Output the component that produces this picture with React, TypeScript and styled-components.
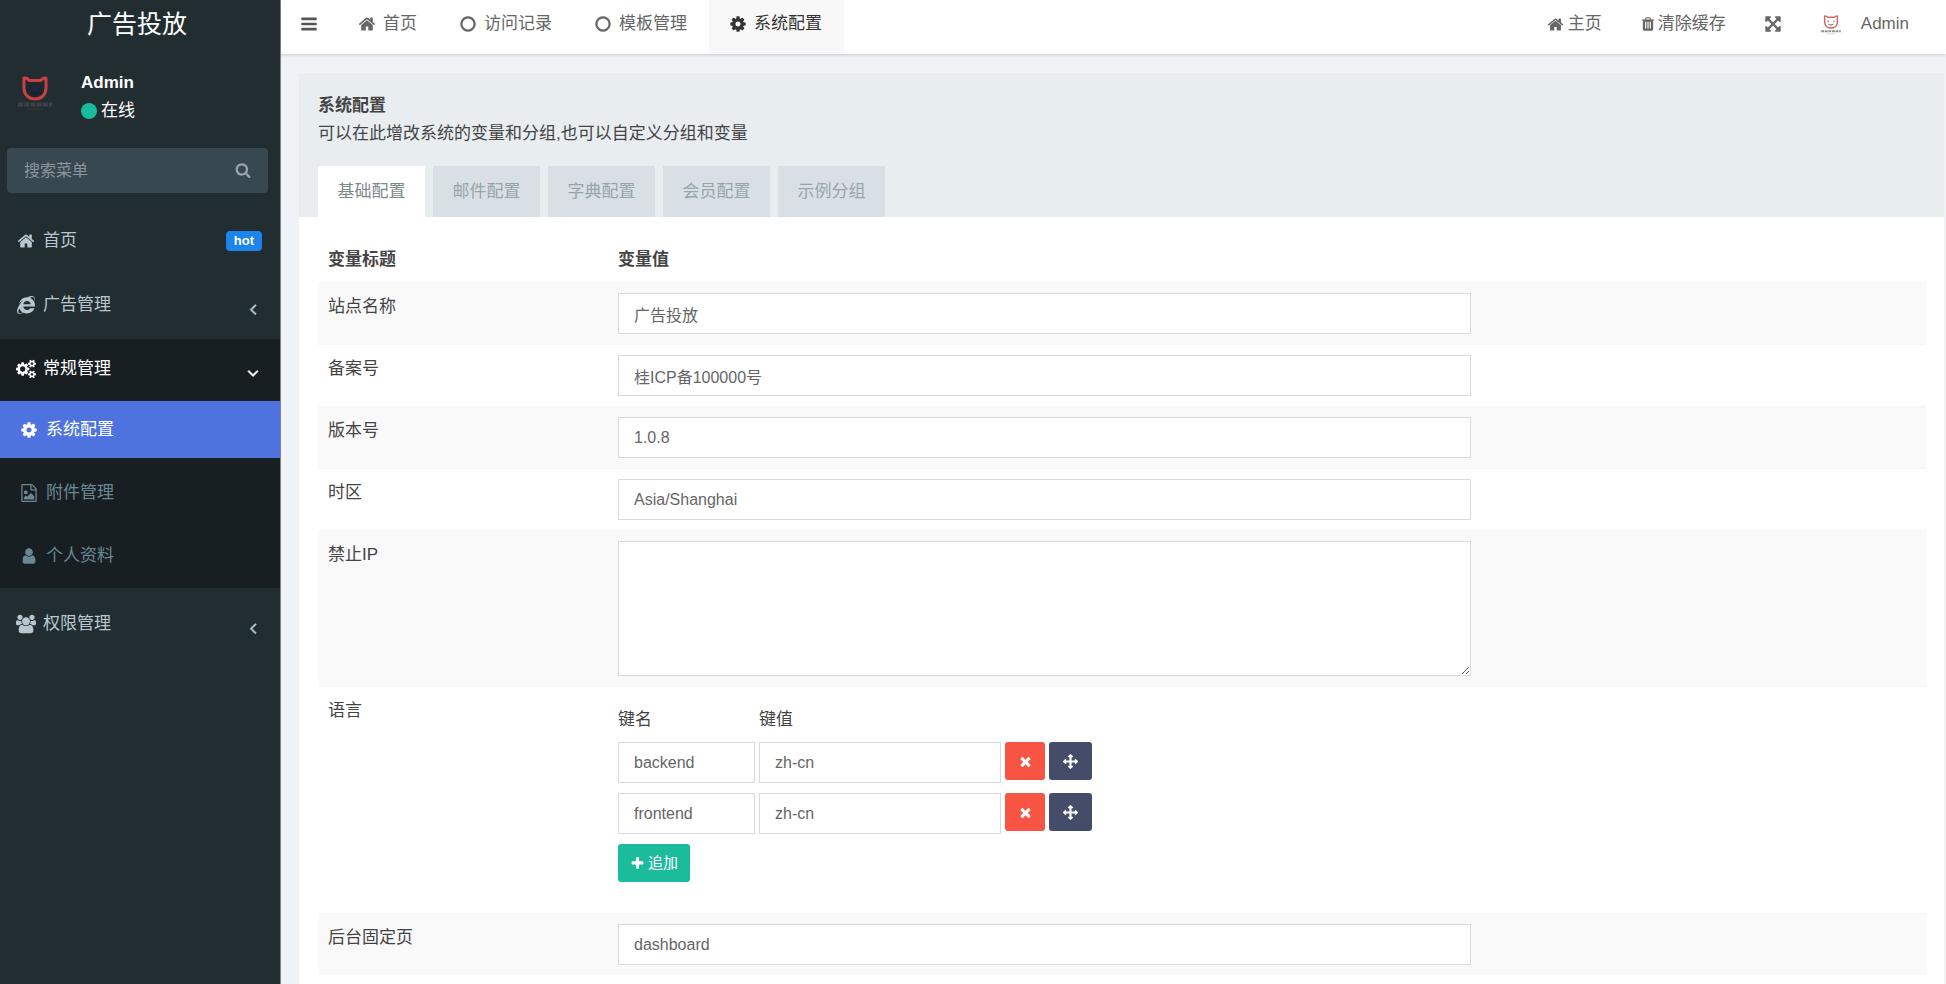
import React, { useState } from "react";
import styled, { createGlobalStyle, css } from "styled-components";
import { FaInternetExplorer } from "react-icons/fa";

const GlobalStyle = createGlobalStyle`
  *, *::before, *::after { box-sizing: border-box; }
  html, body, #root { height: 100%; }
  body {
    margin: 0;
    overflow: hidden;
    background: #eff2f6;
    color: #444;
    font-family: "Liberation Sans", "Noto Sans CJK SC", sans-serif;
    font-size: 17px;
    line-height: 24px;
  }
  a { color: inherit; text-decoration: none; }
  button, input, textarea { font: inherit; margin: 0; }
  ul, ol { list-style: none; margin: 0; padding: 0; }
`;

/* ---------- icons ---------- */

const paths = {
  home: "M1472 992v480q0 26-19 45t-45 19h-384v-384h-256v384h-384q-26 0-45-19t-19-45v-480q0-1 .5-3t.5-3l575-474 575 474q1 2 1 6zm223-69l-62 74q-8 9-21 11h-3q-13 0-21-7l-692-577-692 577q-12 8-24 7-13-2-21-11l-62-74q-8-10-7-23.5t11-21.5l719-599q32-26 76-26t76 26l244 204v-195q0-14 9-23t23-9h192q14 0 23 9t9 23v408l219 182q10 8 11 21.5t-7 23.5z",
  cog: "M1152 896q0-106-75-181t-181-75-181 75-75 181 75 181 181 75 181-75 75-181zm512-109v222q0 12-8 23t-20 13l-185 28q-19 54-39 91 35 50 107 138 10 12 10 25t-9 23q-27 37-99 108t-94 71q-12 0-26-9l-138-108q-44 23-91 38-16 136-29 186-7 28-36 28h-222q-14 0-24.5-8.5t-11.5-21.5l-28-184q-49-16-90-37l-141 107q-10 9-25 9-14 0-25-11-126-114-165-168-7-10-7-23 0-12 8-23 15-21 51-66.5t54-70.5q-27-50-41-99l-183-27q-13-2-21-12.5t-8-23.5v-222q0-12 8-23t19-13l186-28q14-46 39-92-40-57-107-138-10-12-10-24 0-10 9-23 26-36 98.5-107.5t94.5-71.5q13 0 26 10l138 107q44-23 91-38 16-136 29-186 7-28 36-28h222q14 0 24.5 8.5t11.5 21.5l28 184q49 16 90 37l142-107q9-9 24-9 13 0 25 10 129 119 165 170 7 8 7 22 0 12-8 23-15 21-51 66.5t-54 70.5q26 50 41 98l183 28q13 2 21 12.5t8 23.5z",
  cogs: "M896 896q0-106-75-181t-181-75-181 75-75 181 75 181 181 75 181-75 75-181zm768 512q0-52-38-90t-90-38-90 38-38 90q0 53 37.5 90.5t90.5 37.5 90.5-37.5 37.5-90.5zm0-1024q0-52-38-90t-90-38-90 38-38 90q0 53 37.5 90.5t90.5 37.5 90.5-37.5 37.5-90.5zm-384 421v185q0 10-7 19.5t-16 10.5l-155 24q-11 35-32 76 34 48 90 115 7 11 7 20 0 12-7 19-23 30-82.5 89.5t-78.5 59.5q-11 0-21-7l-115-90q-37 19-77 31-11 108-23 155-7 24-30 24h-186q-11 0-20-7.5t-10-17.5l-23-153q-34-10-75-31l-118 89q-7 7-20 7-11 0-21-8-144-133-144-160 0-9 7-19 10-14 41-53t47-61q-23-44-35-82l-152-24q-10-1-17-9.5t-7-19.5v-185q0-10 7-19.5t16-10.5l155-24q11-35 32-76-34-48-90-115-7-11-7-20 0-12 7-20 22-30 82-89t79-59q11 0 21 7l115 90q34-18 77-32 11-108 23-154 7-24 30-24h186q11 0 20 7.5t10 17.5l23 153q34 10 75 31l118-89q8-7 20-7 11 0 21 8 144 133 144 160 0 8-7 19-12 16-42 54t-45 60q23 48 34 82l152 23q10 2 17 10.5t7 19.5zm640 533v140q0 16-149 31-12 27-30 52 51 113 51 138 0 4-4 7-122 71-124 71-8 0-46-47t-52-68q-20 2-30 2t-30-2q-14 21-52 68t-46 47q-2 0-124-71-4-3-4-7 0-25 51-138-18-25-30-52-149-15-149-31v-140q0-16 149-31 13-29 30-52-51-113-51-138 0-4 4-7 4-2 35-20t59-34 30-16q8 0 46 46.5t52 67.5q20-2 30-2t30 2q51-71 92-112l6-2q4 0 124 70 4 3 4 7 0 25-51 138 17 23 30 52 149 15 149 31zm0-1024v140q0 16-149 31-12 27-30 52 51 113 51 138 0 4-4 7-122 71-124 71-8 0-46-47t-52-68q-20 2-30 2t-30-2q-14 21-52 68t-46 47q-2 0-124-71-4-3-4-7 0-25 51-138-18-25-30-52-149-15-149-31v-140q0-16 149-31 13-29 30-52-51-113-51-138 0-4 4-7 4-2 35-20t59-34 30-16q8 0 46 46.5t52 67.5q20-2 30-2t30 2q51-71 92-112l6-2q4 0 124 70 4 3 4 7 0 25-51 138 17 23 30 52 149 15 149 31z",
  bars: "M1664 1344v128q0 26-19 45t-45 19h-1408q-26 0-45-19t-19-45v-128q0-26 19-45t45-19h1408q26 0 45 19t19 45zm0-512v128q0 26-19 45t-45 19h-1408q-26 0-45-19t-19-45v-128q0-26 19-45t45-19h1408q26 0 45 19t19 45zm0-512v128q0 26-19 45t-45 19h-1408q-26 0-45-19t-19-45v-128q0-26 19-45t45-19h1408q26 0 45 19t19 45z",
  circle: "M896 352q-148 0-273 73t-198 198-73 273 73 273 198 198 273 73 273-73 198-198 73-273-73-273-198-198-273-73zm768 544q0 209-103 385.500t-279.500 279.500-385.500 103-385.500-103-279.500-279.500-103-385.500 103-385.500 279.500-279.500 385.500-103 385.500 103 279.500 279.500 103 385.500z",
  search: "M1216 832q0-185-131.5-316.5t-316.5-131.5-316.5 131.5-131.5 316.5 131.5 316.5 316.5 131.5 316.5-131.5 131.5-316.5zm512 832q0 52-38 90t-90 38q-54 0-90-38l-343-342q-179 124-399 124-143 0-273.5-55.5t-225-150-150-225-55.5-273.5 55.5-273.5 150-225 225-150 273.5-55.5 273.5 55.5 225 150 150 225 55.5 273.5q0 220-124 399l343 343q37 37 37 90z",
  trash: "M704 1376v-704q0-14-9-23t-23-9h-64q-14 0-23 9t-9 23v704q0 14 9 23t23 9h64q14 0 23-9t9-23zm256 0v-704q0-14-9-23t-23-9h-64q-14 0-23 9t-9 23v704q0 14 9 23t23 9h64q14 0 23-9t9-23zm256 0v-704q0-14-9-23t-23-9h-64q-14 0-23 9t-9 23v704q0 14 9 23t23 9h64q14 0 23-9t9-23zm-544-992h448l-48-117q-7-9-17-11h-317q-10 2-17 11zm928 32v64q0 14-9 23t-23 9h-96v948q0 83-47 143.5t-113 60.5h-832q-66 0-113-58.5t-47-141.5v-952h-96q-14 0-23-9t-9-23v-64q0-14 9-23t23-9h309l70-167q15-37 54-63t79-26h320q40 0 79 26t54 63l70 167h309q14 0 23 9t9 23z",
  times: "M1490 1322q0 40-28 68l-136 136q-28 28-68 28t-68-28l-294-294-294 294q-28 28-68 28t-68-28l-136-136q-28-28-28-68t28-68l294-294-294-294q-28-28-28-68t28-68l136-136q28-28 68-28t68 28l294 294 294-294q28-28 68-28t68 28l136 136q28 28 28 68t-28 68l-294 294 294 294q28 28 28 68z",
  plus: "M1600 736v192q0 40-28 68t-68 28h-416v416q0 40-28 68t-68 28h-192q-40 0-68-28t-28-68v-416h-416q-40 0-68-28t-28-68v-192q0-40 28-68t68-28h416v-416q0-40 28-68t68-28h192q40 0 68 28t28 68v416h416q40 0 68 28t28 68z",
  arrows: "M1792 896q0 26-19 45l-256 256q-19 19-45 19t-45-19-19-45v-128h-384v384h128q26 0 45 19t19 45-19 45l-256 256q-19 19-45 19t-45-19l-256-256q-19-19-19-45t19-45 45-19h128v-384h-384v128q0 26-19 45t-45 19-45-19l-256-256q-19-19-19-45t19-45l256-256q19-19 45-19t45 19 19 45v128h384v-384h-128q-26 0-45-19t-19-45 19-45l256-256q19-19 45-19t45 19l256 256q19 19 19 45t-19 45-45 19h-128v384h384v-128q0-26 19-45t45-19 45 19l256 256q19 19 19 45z",
  expand: "M1411 541l-355 355 355 355 144-144q29-31 70-14 39 17 39 59v448q0 26-19 45t-45 19h-448q-42 0-59-40-17-39 14-69l144-144-355-355-355 355 144 144q31 30 14 69-17 40-59 40h-448q-26 0-45-19t-19-45v-448q0-42 40-59 39-17 69 14l144 144 355-355-355-355-144 144q-19 19-45 19-12 0-24-5-40-17-40-59v-448q0-26 19-45t45-19h448q42 0 59 40 17 39-14 69l-144 144 355 355 355-355-144-144q-31-30-14-69 17-40 59-40h448q26 0 45 19t19 45v448q0 42-39 59-13 5-25 5-26 0-45-19z",
  left: "M1203 544q0 13-10 23l-393 393 393 393q10 10 10 23t-10 23l-50 50q-10 10-23 10t-23-10l-466-466q-10-10-10-23t10-23l466-466q10-10 23-10t23 10l50 50q10 10 10 23z",
  down: "M1395 736q0 13-10 23l-466 466q-10 10-23 10t-23-10l-466-466q-10-10-10-23t10-23l50-50q10-10 23-10t23 10l393 393 393-393q10-10 23-10t23 10l50 50q10 10 10 23z",
  user: "M1536 1399q0 109-62.5 187t-150.5 78h-854q-88 0-150.5-78t-62.5-187q0-85 8.5-160.5t31.5-152 58.5-131 94-89 134.5-34.5q131 128 313 128t313-128q76 0 134.5 34.5t94 89 58.5 131 31.5 152 8.5 160.5zm-256-887q0 159-112.5 271.5t-271.5 112.5-271.5-112.5-112.5-271.5 112.5-271.5 271.5-112.5 271.5 112.5 112.5 271.5z",
  users: "M593 896q-162 5-265 128h-134q-82 0-138-40.5t-56-118.5q0-353 124-353 6 0 43.5 21t97.5 42.5 119 21.5q67 0 133-23-5 37-5 66 0 139 81 256zm1071 637q0 120-73 189.5t-194 69.5h-874q-121 0-194-69.5t-73-189.5q0-53 3.5-103.5t14-109 26.5-108.5 43-97.5 62-81 85.5-53.5 111.5-20q10 0 43 21.5t73 48 107 48 135 21.5 135-21.5 107-48 73-48 43-21.5q61 0 111.5 20t85.5 53.5 62 81 43 97.5 26.5 108.5 14 109 3.5 103.5zm-1024-1277q0 106-75 181t-181 75-181-75-75-181 75-181 181-75 181 75 75 181zm704 384q0 159-112.5 271.5t-271.5 112.5-271.5-112.5-112.5-271.5 112.5-271.5 271.5-112.5 271.5 112.5 112.5 271.5zm576 225q0 78-56 118.5t-138 40.5h-134q-103-123-265-128 81-117 81-256 0-29-5-66 66 23 133 23 59 0 119-21.5t97.5-42.5 43.5-21q124 0 124 353zm-128-609q0 106-75 181t-181 75-181-75-75-181 75-181 181-75 181 75 75 181z",
  image: "M1596 380q28 28 48 76t20 88v1152q0 40-28 68t-68 28h-1344q-40 0-68-28t-28-68v-1600q0-40 28-68t68-28h896q40 0 88 20t76 48zm-444-244v376h376q-10-29-22-41l-313-313q-12-12-41-22zm384 1528v-1024h-416q-40 0-68-28t-28-68v-416h-768v1536h1280zm-128-448v320h-1024v-192l192-192 128 128 384-384zm-832-192q-80 0-136-56t-56-136 56-136 136-56 136 56 56 136-56 136-136 56z",
};
type IconName = keyof typeof paths;

const IconSvg = styled.svg<{ $bold?: boolean }>`
  display: block;
  flex: none;
  fill: currentColor;
  ${(p) => p.$bold && css`stroke: currentColor; stroke-width: 80;`}
`;

function Icon({ name, size = 18 }: { name: IconName; size?: number }) {
  const wide = name === "cogs" || name === "users";
  return (
    <IconSvg
      $bold={name === "left" || name === "down"}
      width={size}
      height={size}
      viewBox={wide ? "0 0 1920 1792" : "0 0 1792 1792"}
      aria-hidden="true"
    >
      <path d={paths[name]} />
    </IconSvg>
  );
}

function CatLogo({ size, onDark }: { size: number; onDark?: boolean }) {
  return (
    <IconSvg width={size} height={size} viewBox="0 0 38 38" aria-hidden="true">
      <path
        d="M8 5q4 0 5 2.500h12Q26 5 30 5v10c0 7-5 11-11 11S8 22 8 15z"
        fill={onDark ? "#1c2733" : "#fff"}
        stroke={onDark ? "#c8403f" : "#d0645c"}
        strokeWidth={onDark ? 3 : 2.500}
        strokeLinejoin="round"
      />
      <path
        d="M14 13v3M24 13v3M15 19l4 2 4-2"
        fill="none"
        stroke={onDark ? "#17202c" : "#a06a66"}
        strokeWidth="2"
      />
      <path
        d="M2 31.500h34"
        stroke={onDark ? "#3d4247" : "#8d9095"}
        strokeWidth={onDark ? 4 : 3.500}
        strokeDasharray="5 1.200"
      />
      <path d="M11 36h16" stroke={onDark ? "#2c363b" : "#d5d7da"} strokeWidth="1.500" />
    </IconSvg>
  );
}

/* ---------- sidebar ---------- */

const Shell = styled.div`
  display: flex;
  height: 100%;
`;

const Sidebar = styled.aside`
  flex: none;
  width: 281px;
  background: #222d32;
  border-right: 1px solid #7d858c;
  color: #b8c7ce;
`;

const Brand = styled.a`
  display: block;
  height: 54px;
  padding-right: 6px;
  color: #fff;
  font-size: 25px;
  line-height: 48px;
  text-align: center;
`;

const UserPanel = styled.div`
  display: flex;
  gap: 27px;
  height: 94px;
  padding: 17px 16px 0;
  color: #fff;
`;

const Avatar = styled.div`
  padding-top: 2px;
`;

const UserName = styled.p`
  margin: 0;
  font-weight: bold;
`;

const Status = styled.a`
  display: flex;
  align-items: center;
  gap: 4px;
  height: 32px;
`;

const StatusDot = styled.span`
  width: 16px;
  height: 16px;
  border-radius: 50%;
  background: #18bc9c;
`;

const SearchForm = styled.form`
  display: flex;
  height: 45px;
  margin: 0 12px 18px 7px;
  border-radius: 4px;
  background: #374850;
`;

const SearchInput = styled.input`
  flex: 1;
  min-width: 0;
  padding: 0 17px;
  border: 0;
  outline: 0;
  background: transparent;
  color: #fff;
  font-size: 16px;
  &::placeholder { color: #8d979d; opacity: 1; }
`;

const SearchButton = styled.button`
  display: grid;
  place-items: center;
  width: 50px;
  padding: 0 0 2px;
  border: 0;
  background: transparent;
  color: #9aa4a9;
`;

const Menu = styled.ul`
  display: grid;
  gap: 6px;
`;

const MenuGroup = styled.li<{ $open?: boolean }>`
  ${(p) => p.$open && css`background: #181f23; color: #fff;`}
`;

const MenuLink = styled.a`
  display: flex;
  align-items: center;
  gap: 7px;
  height: 58px;
  padding: 2px 18px 0 16px;
`;

const MenuIcon = styled.span`
  display: grid;
  place-items: center;
  width: 20px;
`;

const MenuArrow = styled.span`
  margin-left: auto;
  padding-top: 8px;
`;

const Badge = styled.span`
  margin-left: auto;
  padding: 0 8px;
  border-radius: 4px;
  background: #1c84ea;
  color: #fff;
  font-size: 13px;
  font-weight: bold;
  line-height: 20px;
`;

const SubMenu = styled.ul`
  display: grid;
  gap: 6px;
  padding: 4px 0;
`;

const SubLink = styled.a<{ $active?: boolean }>`
  display: flex;
  align-items: center;
  gap: 8px;
  height: 57px;
  padding: 1px 0 0 20px;
  color: #6c8794;
  ${(p) => p.$active && css`background: #4e73df; color: #fff;`}
`;

/* ---------- top bar ---------- */

const Main = styled.div`
  flex: 1;
  display: flex;
  flex-direction: column;
  min-width: 0;
`;

const TopBar = styled.header`
  flex: none;
  display: flex;
  height: 54px;
  background: #fff;
  box-shadow: 0 1px 3px rgba(0, 21, 41, 0.18);
  color: #666;
`;

const Toggle = styled.button`
  width: 57px;
  height: 47px;
  padding: 0 0 0 19px;
  border: 0;
  background: transparent;
  color: #555;
`;

const NavTab = styled.a<{ $active?: boolean }>`
  display: flex;
  align-items: center;
  gap: 7px;
  padding: 0 22px 6px 20px;
  ${(p) => p.$active && css`background: #f8f8f8; color: #333;`}
`;

const RightNav = styled.nav`
  display: flex;
  margin-left: auto;
  padding-right: 18px;
`;

const RightLink = styled.a<{ $gap?: number }>`
  display: flex;
  align-items: center;
  gap: ${(p) => p.$gap ?? 4}px;
  padding: 0 19px 6px;
`;

/* ---------- content ---------- */

const Content = styled.main`
  flex: 1;
  display: flex;
  min-height: 0;
  padding: 19px 2px 0 18px;
`;

const Panel = styled.section`
  flex: 1;
  min-width: 0;
  background: #fff;
`;

const PanelHead = styled.div`
  height: 144px;
  padding: 21px 19px 0;
  background: #e8edf0;
`;

const PanelTitle = styled.h1`
  margin: 0 0 4px;
  font-size: 17px;
  line-height: 24px;
`;

const PanelLead = styled.p`
  margin: 0 0 20px;
`;

const Tabs = styled.div`
  display: flex;
  gap: 8px;
`;

const Tab = styled.button<{ $active: boolean }>`
  width: 107px;
  height: 51px;
  padding: 0;
  border: 0;
  background: ${(p) => (p.$active ? "#fff" : "#d9e0e5")};
  color: ${(p) => (p.$active ? "#7b8a8b" : "#97a5a9")};
`;

const ConfigTable = styled.table`
  width: calc(100% - 37px);
  margin: 19px 18px 0 19px;
  border-collapse: separate;
  border-spacing: 0;
  table-layout: fixed;
`;

const HeadCell = styled.th<{ $label?: boolean }>`
  width: ${(p) => (p.$label ? "290px" : "auto")};
  padding: 12px 10px 10px;
  text-align: left;
`;

const Row = styled.tr`
  &:nth-child(odd) { background: #f9f9f9; }
`;

const Cell = styled.td`
  padding: 10px;
  border-top: 1px solid #f5f5f5;
  vertical-align: top;
`;

const LabelCell = styled(Cell)`
  padding-top: 12px;
`;

const FieldGrid = styled.div`
  display: grid;
  grid-template-columns: 23fr 12fr;
`;

const fieldBox = css`
  display: block;
  border: 1px solid #d7dbde;
  border-radius: 0;
  outline: 0;
  background: #fff;
  color: #666;
  font-size: 16px;
`;

const TextInput = styled.input<{ $width?: number }>`
  ${fieldBox}
  width: ${(p) => (p.$width ? `${p.$width}px` : "100%")};
  height: 41px;
  padding: 0 15px;
`;

const TextArea = styled.textarea`
  ${fieldBox}
  width: 100%;
  height: 135px;
  padding: 8px 15px;
  resize: vertical;
`;

const PairList = styled.div`
  display: grid;
  gap: 10px;
  justify-items: start;
  padding: 11px 0 21px;
`;

const PairRow = styled.div`
  display: flex;
  gap: 4px;
`;

const PairHead = styled.span<{ $width: number }>`
  width: ${(p) => p.$width}px;
`;

const ActionButton = styled.button<{ $bg: string; $width: number }>`
  display: flex;
  align-items: center;
  justify-content: center;
  gap: 3px;
  width: ${(p) => p.$width}px;
  height: 38px;
  padding: 0;
  border: 0;
  border-radius: 3px;
  background: ${(p) => p.$bg};
  color: #fff;
  font-size: 15px;
`;

/* ---------- data ---------- */

const navTabs: { icon: IconName; text: string }[] = [
  { icon: "home", text: "首页" },
  { icon: "circle", text: "访问记录" },
  { icon: "circle", text: "模板管理" },
  { icon: "cog", text: "系统配置" },
];

const subItems: { icon: IconName; text: string }[] = [
  { icon: "cog", text: "系统配置" },
  { icon: "image", text: "附件管理" },
  { icon: "user", text: "个人资料" },
];

const groups = ["基础配置", "邮件配置", "字典配置", "会员配置", "示例分组"];

const fields = [
  { id: "name", label: "站点名称", value: "广告投放" },
  { id: "beian", label: "备案号", value: "桂ICP备100000号" },
  { id: "version", label: "版本号", value: "1.0.8" },
  { id: "timezone", label: "时区", value: "Asia/Shanghai" },
];

function FieldRow({ id, label, children }: { id: string; label: string; children: React.ReactNode }) {
  return (
    <Row>
      <LabelCell><label htmlFor={id}>{label}</label></LabelCell>
      <Cell><FieldGrid>{children}</FieldGrid></Cell>
    </Row>
  );
}

export default function App() {
  const [group, setGroup] = useState(0);
  const [pairs, setPairs] = useState([
    { key: "backend", value: "zh-cn" },
    { key: "frontend", value: "zh-cn" },
  ]);

  return (
    <>
      <GlobalStyle />
      <Shell>
        <Sidebar>
          <Brand href="#">广告投放</Brand>
          <UserPanel>
            <Avatar><CatLogo size={38} onDark /></Avatar>
            <div>
              <UserName>Admin</UserName>
              <Status href="#"><StatusDot />在线</Status>
            </div>
          </UserPanel>
          <SearchForm onSubmit={(e) => e.preventDefault()}>
            <SearchInput aria-label="搜索菜单" placeholder="搜索菜单" />
            <SearchButton aria-label="搜索"><Icon name="search" size={16} /></SearchButton>
          </SearchForm>
          <Menu>
            <MenuGroup>
              <MenuLink href="#">
                <MenuIcon><Icon name="home" /></MenuIcon>首页
                <Badge>hot</Badge>
              </MenuLink>
            </MenuGroup>
            <MenuGroup>
              <MenuLink href="#">
                <MenuIcon><FaInternetExplorer size={18} /></MenuIcon>广告管理
                <MenuArrow><Icon name="left" /></MenuArrow>
              </MenuLink>
            </MenuGroup>
            <MenuGroup $open>
              <MenuLink href="#">
                <MenuIcon><Icon name="cogs" size={20} /></MenuIcon>常规管理
                <MenuArrow><Icon name="down" /></MenuArrow>
              </MenuLink>
              <SubMenu>
                {subItems.map((item, i) => (
                  <li key={item.text}>
                    <SubLink href="#" $active={i === 0}>
                      <Icon name={item.icon} />{item.text}
                    </SubLink>
                  </li>
                ))}
              </SubMenu>
            </MenuGroup>
            <MenuGroup>
              <MenuLink href="#">
                <MenuIcon><Icon name="users" size={20} /></MenuIcon>权限管理
                <MenuArrow><Icon name="left" /></MenuArrow>
              </MenuLink>
            </MenuGroup>
          </Menu>
        </Sidebar>

        <Main>
          <TopBar>
            <Toggle aria-label="切换菜单"><Icon name="bars" /></Toggle>
            {navTabs.map((t, i) => (
              <NavTab key={t.text} href="#" $active={i === 3}>
                <Icon name={t.icon} />{t.text}
              </NavTab>
            ))}
            <RightNav>
              <RightLink href="#"><Icon name="home" size={17} />主页</RightLink>
              <RightLink href="#" $gap={2}><Icon name="trash" size={16} />清除缓存</RightLink>
              <RightLink href="#" aria-label="全屏"><Icon name="expand" size={18} /></RightLink>
              <RightLink href="#" $gap={19}><CatLogo size={22} />Admin</RightLink>
            </RightNav>
          </TopBar>

          <Content>
            <Panel>
              <PanelHead>
                <PanelTitle>系统配置</PanelTitle>
                <PanelLead>可以在此增改系统的变量和分组,也可以自定义分组和变量</PanelLead>
                <Tabs role="tablist">
                  {groups.map((g, i) => (
                    <Tab key={g} role="tab" aria-selected={i === group} $active={i === group} onClick={() => setGroup(i)}>
                      {g}
                    </Tab>
                  ))}
                </Tabs>
              </PanelHead>
              <ConfigTable>
                <thead>
                  <tr>
                    <HeadCell $label>变量标题</HeadCell>
                    <HeadCell>变量值</HeadCell>
                  </tr>
                </thead>
                <tbody>
                  {fields.map((f) => (
                    <FieldRow key={f.id} id={f.id} label={f.label}>
                      <TextInput id={f.id} defaultValue={f.value} />
                    </FieldRow>
                  ))}
                  <FieldRow id="forbiddenip" label="禁止IP">
                    <TextArea id="forbiddenip" />
                  </FieldRow>
                  <Row>
                    <LabelCell>语言</LabelCell>
                    <Cell>
                      <PairList>
                        <PairRow>
                          <PairHead $width={137}>键名</PairHead>
                          <PairHead $width={242}>键值</PairHead>
                        </PairRow>
                        {pairs.map((p, i) => (
                          <PairRow key={i}>
                            <TextInput $width={137} aria-label="键名" defaultValue={p.key} />
                            <TextInput $width={242} aria-label="键值" defaultValue={p.value} />
                            <ActionButton
                              $bg="#f75444"
                              $width={40}
                              aria-label="删除"
                              onClick={() => setPairs(pairs.filter((_, n) => n !== i))}
                            >
                              <Icon name="times" size={15} />
                            </ActionButton>
                            <ActionButton $bg="#444c69" $width={43} aria-label="移动">
                              <Icon name="arrows" size={15} />
                            </ActionButton>
                          </PairRow>
                        ))}
                        <ActionButton
                          $bg="#1abc9c"
                          $width={72}
                          onClick={() => setPairs([...pairs, { key: "", value: "" }])}
                        >
                          <Icon name="plus" size={15} />追加
                        </ActionButton>
                      </PairList>
                    </Cell>
                  </Row>
                  <FieldRow id="fixedpage" label="后台固定页">
                    <TextInput id="fixedpage" defaultValue="dashboard" />
                  </FieldRow>
                </tbody>
              </ConfigTable>
            </Panel>
          </Content>
        </Main>
      </Shell>
    </>
  );
}
